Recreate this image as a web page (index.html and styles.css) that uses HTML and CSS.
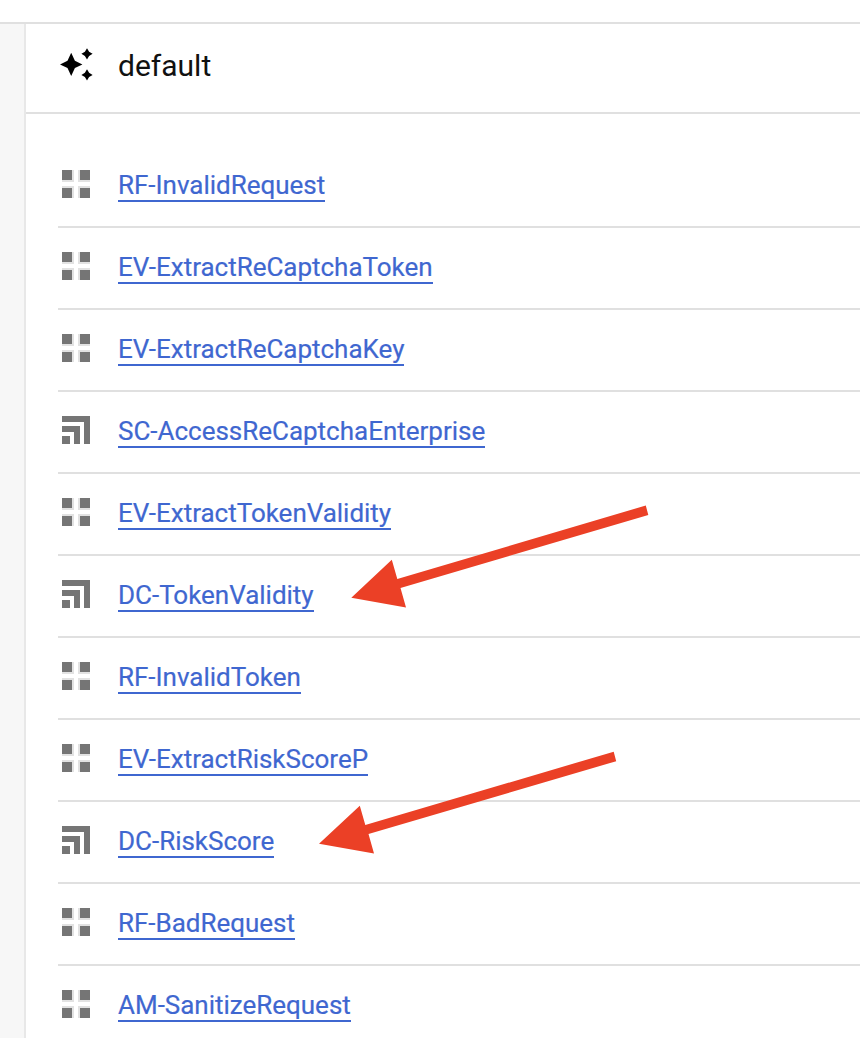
FILE: index.html
```
<!DOCTYPE html>
<html lang="en">
<head>
<meta charset="utf-8">
<title>Policies</title>
<link rel="stylesheet" href="styles.css">
</head>
<body>
<svg class="defs" width="0" height="0" aria-hidden="true">
  <symbol id="policy" viewBox="0 0 28 28">
    <path fill="#e2e2e2" d="M0 0H12V12H0zM16 0H28V12H16zM0 16H12V28H0zM16 16H28V28H16z"/>
    <path fill="#757575" d="M0 0H10V10H0zM18 0H28V10H18zM0 18H10V28H0zM18 18H28V28H18z"/>
  </symbol>
  <symbol id="callout" viewBox="0 0 28 28">
    <path fill="#757575" d="M0 0H28V28H22V6H0zM0 10H18V28H12V16H0zM0 20H8V28H0z"/>
  </symbol>
</svg>
<div class="topbar"></div>
<div class="body">
  <aside class="gutter"></aside>
  <main class="panel">
    <header class="header">
      <svg class="sparkle" width="34" height="34" viewBox="0 0 34 34"><path d="M11.2 4.8L14.9 12.7L22.4 16.4L14.9 20.1L11.2 28L7.5 20.1L0 16.4L7.5 12.7zM27 .2L29.1 3.7L32.6 5.8L29.1 7.9L27 11.4L24.9 7.9L21.4 5.8L24.9 3.7zM27 21.3L29.1 24.8L32.6 26.9L29.1 29L27 32.5L24.9 29L21.4 26.9L24.9 24.8z"/></svg>
      <h1 class="title">default</h1>
    </header>
    <ul class="list">
      <li class="row"><svg class="icon"><use href="#policy"/></svg><a class="link">RF-InvalidRequest</a></li>
      <li class="row"><svg class="icon"><use href="#policy"/></svg><a class="link">EV-ExtractReCaptchaToken</a></li>
      <li class="row"><svg class="icon"><use href="#policy"/></svg><a class="link">EV-ExtractReCaptchaKey</a></li>
      <li class="row"><svg class="icon"><use href="#callout"/></svg><a class="link">SC-AccessReCaptchaEnterprise</a></li>
      <li class="row"><svg class="icon"><use href="#policy"/></svg><a class="link">EV-ExtractTokenValidity</a></li>
      <li class="row"><svg class="icon"><use href="#callout"/></svg><a class="link">DC-TokenValidity</a></li>
      <li class="row"><svg class="icon"><use href="#policy"/></svg><a class="link">RF-InvalidToken</a></li>
      <li class="row"><svg class="icon"><use href="#policy"/></svg><a class="link">EV-ExtractRiskScoreP</a></li>
      <li class="row"><svg class="icon"><use href="#callout"/></svg><a class="link">DC-RiskScore</a></li>
      <li class="row"><svg class="icon"><use href="#policy"/></svg><a class="link">RF-BadRequest</a></li>
      <li class="row"><svg class="icon"><use href="#policy"/></svg><a class="link">AM-SanitizeRequest</a></li>
    </ul>
  </main>
</div>
<svg class="arrows" width="860" height="1038" viewBox="0 0 860 1038" aria-hidden="true">
  <path d="M351.3 597.7L391.8 559.7L397.3 579L645.8 505.5L648.3 515L400.5 588L406 607.6z"/>
  <path d="M319 843.7L359.8 805.7L365.3 825L613.7 751.7L616.2 761.2L368.5 834L374 853.6z"/>
</svg>
</body>
</html>
```
FILE: styles.css
```
* { box-sizing: border-box; }

body {
  position: relative;
  display: flex;
  flex-direction: column;
  height: 1038px;
  margin: 0;
  overflow: hidden;
  background: #fff;
  font-family: Roboto, sans-serif;
}

.defs { display: none; }

.topbar {
  flex: none;
  height: 24px;
  border-bottom: 2px solid #e0e0e0;
}

.body {
  display: flex;
  flex: 1;
  min-height: 0;
}

.gutter {
  flex: none;
  width: 26px;
  border-right: 2px solid #e8e8e8;
  background: #f7f7f7;
}

.panel { flex: 1; min-width: 0; }

.header {
  display: flex;
  align-items: center;
  gap: 24px;
  height: 90px;
  padding: 0 0 6px 34px;
  border-bottom: 2px solid #e0e0e0;
}

.sparkle { fill: #000; }

.title {
  margin: 0;
  padding-top: 2px;
  color: #111;
  font-size: 30px;
  font-weight: 400;
  line-height: 36px;
}

.list {
  margin: 0;
  padding: 32px 0 0 32px;
  list-style: none;
}

.row {
  display: flex;
  align-items: flex-start;
  gap: 28px;
  height: 82px;
  padding: 24px 0 0 4px;
  border-bottom: 2px solid #e0e0e0;
}

.icon { flex: none; width: 28px; height: 28px; }

.link {
  height: 32px;
  border-bottom: 2px solid #3f67d0;
  color: #3f67d0;
  font-size: 26px;
  line-height: 30px;
  letter-spacing: -0.015px;
  white-space: nowrap;
  -webkit-text-stroke: 0.2px #3f67d0;
}

.arrows {
  position: absolute;
  top: 0;
  left: 0;
  fill: #eb4026;
  pointer-events: none;
}
```
